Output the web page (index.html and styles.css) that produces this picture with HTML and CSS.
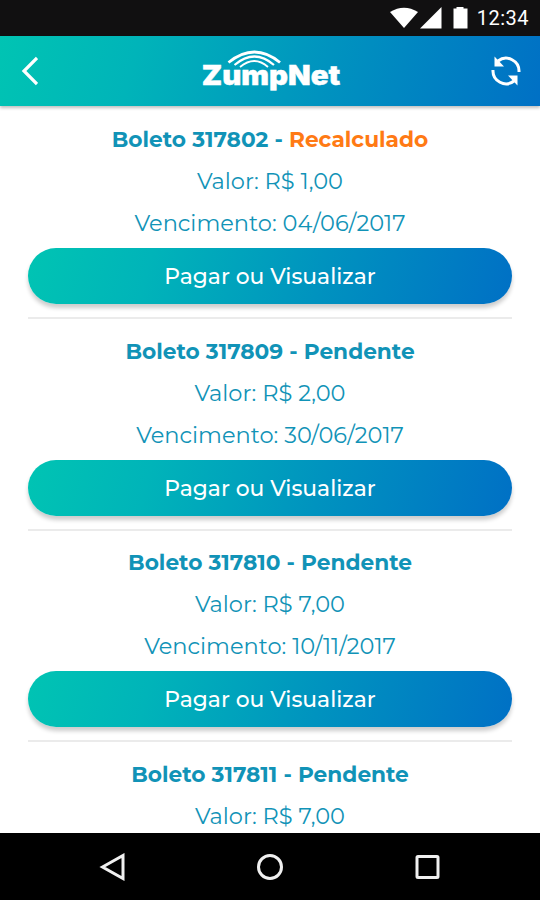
FILE: index.html
```html
<!DOCTYPE html>
<html lang="pt-BR">
<head>
    <meta charset="UTF-8">
    <meta name="viewport" content="width=device-width, initial-scale=1.0">
    <title>ZumpNet</title>
    <link rel="stylesheet" href="styles.css">
</head>
<body>
    <div class="status-bar">
        <svg class="status-icons" width="80" height="22" viewBox="0 0 80 22" fill="#fff">
            <path d="M0 5Q14-3.500 28 5L14 21Z"/>
            <path d="M30 21.500L51.500 0V21.500Z"/>
            <path d="M66.500 0h7v1.500h4v20H63.500V1.500h3z"/>
        </svg>
        <span class="clock">12:34</span>
    </div>

    <header class="header">
        <svg class="back-icon" width="18" height="30" viewBox="0 0 18 30">
            <path d="M17 2L4 15L17 28" fill="none" stroke="#fff" stroke-width="3.200"/>
        </svg>
        <div class="logo">
            <svg class="logo-waves" width="56" height="22" viewBox="0 0 56 22" fill="none" stroke="#fff">
                <path d="M1.500 12.500Q27.500-8.500 53 12.500" stroke-width="2.800"/>
                <path d="M7.500 15Q27.500-2 47 15" stroke-width="2.200"/>
                <path d="M13 17Q27.500 5 41 17" stroke-width="1.800"/>
            </svg>
            <span class="logo-text">ZumpNet</span>
        </div>
        <svg class="refresh-icon" width="32" height="32" viewBox="0 0 32 32">
            <g fill="none" stroke="#fff" stroke-width="3">
                <path d="M8 6A13 13 0 0 1 29 17"/>
                <path d="M24 26A13 13 0 0 1 3 15"/>
            </g>
            <path d="M4.500 1.500V11.500H14z" fill="#fff"/>
            <path d="M27.500 30.500V20.500H18z" fill="#fff"/>
        </svg>
    </header>

    <main class="boletos">
        <div class="boleto">
            <h2 class="boleto-title">Boleto 317802 - <span class="recalculado">Recalculado</span></h2>
            <p class="valor">Valor: R$ 1,00</p>
            <p class="vencimento">Vencimento: 04/06/2017</p>
            <button class="pagar-btn">Pagar ou Visualizar</button>
        </div>
        <div class="boleto">
            <h2 class="boleto-title">Boleto 317809 - Pendente</h2>
            <p class="valor">Valor: R$ 2,00</p>
            <p class="vencimento">Vencimento: 30/06/2017</p>
            <button class="pagar-btn">Pagar ou Visualizar</button>
        </div>
        <div class="boleto">
            <h2 class="boleto-title">Boleto 317810 - Pendente</h2>
            <p class="valor">Valor: R$ 7,00</p>
            <p class="vencimento">Vencimento: 10/11/2017</p>
            <button class="pagar-btn">Pagar ou Visualizar</button>
        </div>
        <div class="boleto">
            <h2 class="boleto-title">Boleto 317811 - Pendente</h2>
            <p class="valor">Valor: R$ 7,00</p>
        </div>
    </main>

    <nav class="nav-bar">
        <svg width="28" height="28" viewBox="0 0 28 28"><path d="M3.500 14L24 2.500V25.500Z"/></svg>
        <svg width="28" height="28" viewBox="0 0 28 28"><circle cx="14" cy="14" r="11.500"/></svg>
        <svg width="28" height="28" viewBox="0 0 28 28"><rect x="4" y="3.500" width="21" height="21" rx="1"/></svg>
    </nav>
</body>
</html>
```
FILE: styles.css
```css
* {
    margin: 0;
    padding: 0;
    box-sizing: border-box;
}

body {
    font-family: Montserrat, Inter, sans-serif;
    background: #ffffff;
    color: #1193b7;
    display: flex;
    flex-direction: column;
    height: 100vh;
    overflow: hidden;
    text-align: center;
}

.status-bar {
    flex: 0 0 36px;
    background: #111011;
    color: #ffffff;
    display: flex;
    justify-content: flex-end;
    align-items: center;
    gap: 7px;
    padding-right: 11px;
}

.clock {
    font-family: Roboto, sans-serif;
    font-size: 20px;
    letter-spacing: 0.5px;
}

.header {
    flex: 0 0 70px;
    background: linear-gradient(105deg, #00c4b3 0%, #00b4b9 25%, #0093bf 60%, #0070c5 100%);
    display: flex;
    justify-content: space-between;
    align-items: center;
    padding: 0 18px 0 20px;
    box-shadow: 0 2px 3px rgba(0, 0, 0, 0.25);
}

.logo {
    position: relative;
    width: 140px;
    margin-left: 14px;
    padding-top: 8px;
    white-space: nowrap;
}

.logo-text {
    display: block;
    font-family: Inter, "Liberation Sans", sans-serif;
    font-size: 26.5px;
    line-height: 32px;
    font-weight: 900;
    color: #ffffff;
    -webkit-text-stroke: 0.4px #ffffff;
    transform: scaleX(1.11);
}

.logo-waves {
    position: absolute;
    left: 26px;
    top: -1px;
}

.boletos {
    flex: 1;
    min-height: 0;
    overflow: hidden;
    padding: 12px 28px 0;
}

.boleto {
    height: 201px;
    margin-bottom: 10.7px;
    border-bottom: 2px solid #ebebeb;
}

.boleto-title,
.valor,
.vencimento {
    font-size: 22.5px;
    line-height: 42px;
    white-space: nowrap;
}

.boleto-title {
    font-size: 21.7px;
    font-weight: 700;
}

.recalculado {
    color: #ff7a14;
}

.pagar-btn {
    display: block;
    width: 484px;
    height: 56px;
    margin-top: 4px;
    border: none;
    border-radius: 28px;
    background: linear-gradient(105deg, #00c4b3 0%, #00b4b9 25%, #0093bf 60%, #0070c5 100%);
    box-shadow: 0 4px 4px rgba(0, 0, 0, 0.2);
    color: #ffffff;
    font-family: inherit;
    font-size: 21.8px;
    font-weight: 500;
}

.nav-bar {
    flex: 0 0 67px;
    background: #000000;
    display: flex;
    justify-content: space-between;
    align-items: center;
    padding: 0 99px;
}

.nav-bar svg {
    fill: none;
    stroke: #f0f0f0;
    stroke-width: 3;
}
```
